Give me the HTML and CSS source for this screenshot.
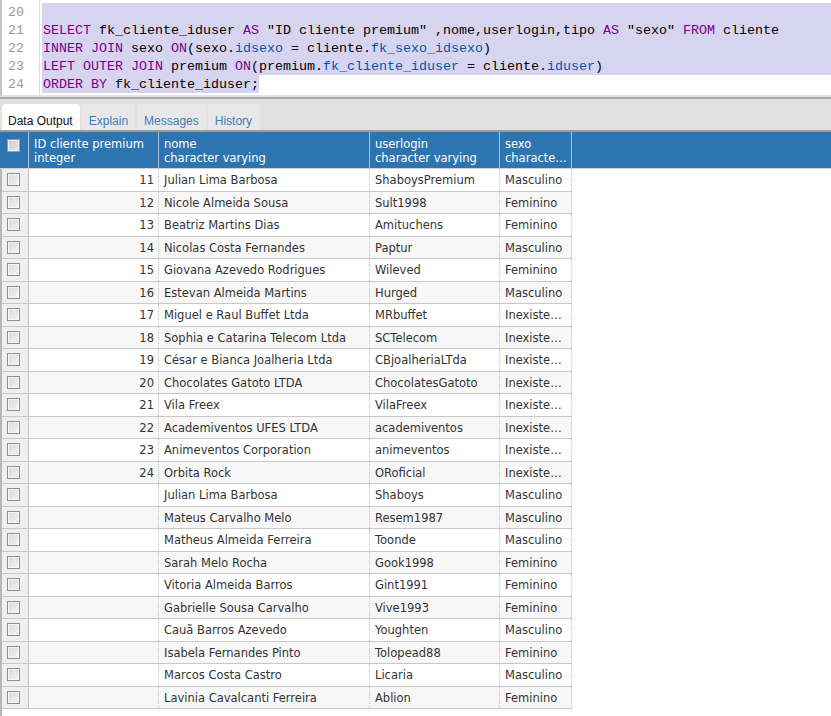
FILE: index.html
```html
<!DOCTYPE html>
<html lang="pt">
<head>
<meta charset="utf-8">
<title>Query</title>
<link rel="stylesheet" href="styles.css">
</head>
<body>
<div class="editor">
  <div class="gutter">
    <div class="ln">20</div>
    <div class="ln">21</div>
    <div class="ln">22</div>
    <div class="ln">23</div>
    <div class="ln">24</div>
  </div>
  <div class="code">
    <div class="line sel"> </div>
    <div class="line sel"><span class="kw">SELECT</span> fk_cliente_iduser <span class="kw">AS</span> "ID cliente premium" ,nome,userlogin,tipo <span class="kw">AS</span> "sexo" <span class="kw">FROM</span> cliente</div>
    <div class="line sel"><span class="kw">INNER JOIN</span> sexo <span class="kw">ON</span>(sexo.<span class="var">idsexo</span> = cliente.<span class="var">fk_sexo_idsexo</span>)</div>
    <div class="line sel"><span class="kw">LEFT OUTER JOIN</span> premium <span class="kw">ON</span>(premium.<span class="var">fk_cliente_iduser</span> = cliente.<span class="var">iduser</span>)</div>
    <div class="line"><span class="sel-part"><span class="kw">ORDER BY</span> fk_cliente_iduser;</span></div>
  </div>
</div>
<div class="results">
  <div class="tabs">
    <div class="tab active">Data Output</div>
    <div class="tab">Explain</div>
    <div class="tab">Messages</div>
    <div class="tab">History</div>
  </div>
  <div class="grid">
    <div class="head">
      <div class="hc h-cb"><span class="chk"></span></div>
      <div class="hc h-id"><div>ID cliente premium</div><div>integer</div></div>
      <div class="hc h-nome"><div>nome</div><div>character varying</div></div>
      <div class="hc h-login"><div>userlogin</div><div>character varying</div></div>
      <div class="hc h-sexo"><div>sexo</div><div>character varying</div></div>
    </div>
    <div class="body">
      <div class="row"><div class="cell c-cb"><span class="chk"></span></div><div class="cell c-id">11</div><div class="cell c-nome">Julian Lima Barbosa</div><div class="cell c-login">ShaboysPremium</div><div class="cell c-sexo">Masculino</div></div>
      <div class="row"><div class="cell c-cb"><span class="chk"></span></div><div class="cell c-id">12</div><div class="cell c-nome">Nicole Almeida Sousa</div><div class="cell c-login">Sult1998</div><div class="cell c-sexo">Feminino</div></div>
      <div class="row"><div class="cell c-cb"><span class="chk"></span></div><div class="cell c-id">13</div><div class="cell c-nome">Beatriz Martins Dias</div><div class="cell c-login">Amituchens</div><div class="cell c-sexo">Feminino</div></div>
      <div class="row"><div class="cell c-cb"><span class="chk"></span></div><div class="cell c-id">14</div><div class="cell c-nome">Nicolas Costa Fernandes</div><div class="cell c-login">Paptur</div><div class="cell c-sexo">Masculino</div></div>
      <div class="row"><div class="cell c-cb"><span class="chk"></span></div><div class="cell c-id">15</div><div class="cell c-nome">Giovana Azevedo Rodrigues</div><div class="cell c-login">Wileved</div><div class="cell c-sexo">Feminino</div></div>
      <div class="row"><div class="cell c-cb"><span class="chk"></span></div><div class="cell c-id">16</div><div class="cell c-nome">Estevan Almeida Martins</div><div class="cell c-login">Hurged</div><div class="cell c-sexo">Masculino</div></div>
      <div class="row"><div class="cell c-cb"><span class="chk"></span></div><div class="cell c-id">17</div><div class="cell c-nome">Miguel e Raul Buffet Ltda</div><div class="cell c-login">MRbuffet</div><div class="cell c-sexo">Inexistente</div></div>
      <div class="row"><div class="cell c-cb"><span class="chk"></span></div><div class="cell c-id">18</div><div class="cell c-nome">Sophia e Catarina Telecom Ltda</div><div class="cell c-login">SCTelecom</div><div class="cell c-sexo">Inexistente</div></div>
      <div class="row"><div class="cell c-cb"><span class="chk"></span></div><div class="cell c-id">19</div><div class="cell c-nome">César e Bianca Joalheria Ltda</div><div class="cell c-login">CBjoalheriaLTda</div><div class="cell c-sexo">Inexistente</div></div>
      <div class="row"><div class="cell c-cb"><span class="chk"></span></div><div class="cell c-id">20</div><div class="cell c-nome">Chocolates Gatoto LTDA</div><div class="cell c-login">ChocolatesGatoto</div><div class="cell c-sexo">Inexistente</div></div>
      <div class="row"><div class="cell c-cb"><span class="chk"></span></div><div class="cell c-id">21</div><div class="cell c-nome">Vila Freex</div><div class="cell c-login">VilaFreex</div><div class="cell c-sexo">Inexistente</div></div>
      <div class="row"><div class="cell c-cb"><span class="chk"></span></div><div class="cell c-id">22</div><div class="cell c-nome">Academiventos UFES LTDA</div><div class="cell c-login">academiventos</div><div class="cell c-sexo">Inexistente</div></div>
      <div class="row"><div class="cell c-cb"><span class="chk"></span></div><div class="cell c-id">23</div><div class="cell c-nome">Animeventos Corporation</div><div class="cell c-login">animeventos</div><div class="cell c-sexo">Inexistente</div></div>
      <div class="row"><div class="cell c-cb"><span class="chk"></span></div><div class="cell c-id">24</div><div class="cell c-nome">Orbita Rock</div><div class="cell c-login">ORoficial</div><div class="cell c-sexo">Inexistente</div></div>
      <div class="row"><div class="cell c-cb"><span class="chk"></span></div><div class="cell c-id"></div><div class="cell c-nome">Julian Lima Barbosa</div><div class="cell c-login">Shaboys</div><div class="cell c-sexo">Masculino</div></div>
      <div class="row"><div class="cell c-cb"><span class="chk"></span></div><div class="cell c-id"></div><div class="cell c-nome">Mateus Carvalho Melo</div><div class="cell c-login">Resem1987</div><div class="cell c-sexo">Masculino</div></div>
      <div class="row"><div class="cell c-cb"><span class="chk"></span></div><div class="cell c-id"></div><div class="cell c-nome">Matheus Almeida Ferreira</div><div class="cell c-login">Toonde</div><div class="cell c-sexo">Masculino</div></div>
      <div class="row"><div class="cell c-cb"><span class="chk"></span></div><div class="cell c-id"></div><div class="cell c-nome">Sarah Melo Rocha</div><div class="cell c-login">Gook1998</div><div class="cell c-sexo">Feminino</div></div>
      <div class="row"><div class="cell c-cb"><span class="chk"></span></div><div class="cell c-id"></div><div class="cell c-nome">Vitoria Almeida Barros</div><div class="cell c-login">Gint1991</div><div class="cell c-sexo">Feminino</div></div>
      <div class="row"><div class="cell c-cb"><span class="chk"></span></div><div class="cell c-id"></div><div class="cell c-nome">Gabrielle Sousa Carvalho</div><div class="cell c-login">Vive1993</div><div class="cell c-sexo">Feminino</div></div>
      <div class="row"><div class="cell c-cb"><span class="chk"></span></div><div class="cell c-id"></div><div class="cell c-nome">Cauã Barros Azevedo</div><div class="cell c-login">Youghten</div><div class="cell c-sexo">Masculino</div></div>
      <div class="row"><div class="cell c-cb"><span class="chk"></span></div><div class="cell c-id"></div><div class="cell c-nome">Isabela Fernandes Pinto</div><div class="cell c-login">Tolopead88</div><div class="cell c-sexo">Feminino</div></div>
      <div class="row"><div class="cell c-cb"><span class="chk"></span></div><div class="cell c-id"></div><div class="cell c-nome">Marcos Costa Castro</div><div class="cell c-login">Licaria</div><div class="cell c-sexo">Masculino</div></div>
      <div class="row"><div class="cell c-cb"><span class="chk"></span></div><div class="cell c-id"></div><div class="cell c-nome">Lavinia Cavalcanti Ferreira</div><div class="cell c-login">Ablion</div><div class="cell c-sexo">Feminino</div></div>
    </div>
  </div>
</div>
</body>
</html>
```
FILE: styles.css
```css
* { box-sizing: border-box; }
html, body { margin: 0; padding: 0; background: #fff; }
body {
  width: 831px;
  height: 716px;
  overflow: hidden;
  display: flex;
  flex-direction: column;
  font-family: "DejaVu Sans", Verdana, sans-serif;
  font-size: 11.5px;
  color: #333;
}

/* ---------- editor ---------- */
.editor {
  height: 97px;
  flex: none;
  display: flex;
  overflow: hidden;
  border-left: 2px solid #c4c4c4;
  border-bottom: 2px solid #e2e2e2;
  font-family: "Liberation Mono", "Courier New", monospace;
  font-size: 13.333px;
}
.gutter {
  width: 38px;
  flex: none;
  border-right: 1px solid #dcdcdc;
  padding-top: 3px;
  padding-right: 15px;
  text-align: right;
  color: #999;
}
.ln { height: 18px; padding-top: 2px; line-height: 16px; }
.code {
  flex: 1;
  min-width: 0;
  padding-top: 3px;
  padding-left: 2px;
  color: #000;
}
.line { padding: 2px 0 0 1px; height: 18px; line-height: 16px; white-space: pre; }
.sel { background: #d7d4f0; }
.sel-part { background: #d7d4f0; display: inline-block; height: 18px; margin: -2px 0 0 -1px; padding: 2px 0 0 1px; }
.kw { color: #770088; }
.var { color: #0055aa; }

/* ---------- results ---------- */
.results {
  flex: 1;
  display: flex;
  flex-direction: column;
  border-top: 2px solid #a9a9a9;
  min-height: 0;
}
.tabs {
  height: 33px;
  flex: none;
  display: flex;
  gap: 2px;
  padding: 5px 0 0 2px;
  background: #e1e1e1;
  border-bottom: 2px solid #9c9c9c;
  font-family: "Liberation Sans", Arial, sans-serif;
  font-size: 12px;
}
.tab {
  height: 26px;
  padding: 10px 7px 0;
  line-height: 14px;
  border-radius: 4px 4px 0 0;
  background: #e8e8e8;
  color: #3b7cc4;
}
.tab.active {
  background: #fff;
  color: #111;
  padding: 10px 7px 0 6px;
}

.grid {
  flex: 1;
  display: flex;
  flex-direction: column;
}
.head {
  height: 37px;
  flex: none;
  display: flex;
  background: #2c75b0;
  color: #fff;
  border-bottom: 1px solid #cfcfcf;
}
.hc {
  height: 36px;
  padding: 6px 4px 0 5px;
  line-height: 13.5px;
  text-align: left;
  border-right: 1px solid #a9c3da;
  white-space: nowrap;
  overflow: hidden;
}
.hc div { overflow: hidden; text-overflow: ellipsis; }
.h-cb { width: 29px; padding: 7px 0 0 7px; }
.h-id { width: 130px; }
.h-nome { width: 211px; }
.h-login { width: 130px; }
.h-sexo { width: 72px; }

.body {
  flex: 1;
  border-left: 2px solid #b8b8b8;
}
.row {
  display: flex;
  height: 22.5px;
  width: 570px;
  border-bottom: 1px solid #c8c8c8;
  background: #fff;
}
.row:nth-child(even) { background: #f7f7f7; }
.cell {
  padding: 1px 4px 0 5px;
  line-height: 21px;
  white-space: nowrap;
  overflow: hidden;
  text-overflow: ellipsis;
  border-right: 1px dotted #c4c4c4;
}
.c-cb {
  width: 27px;
  padding: 4px 0 0 5px;
  background: #efefef;
  border-right: 1px solid #c4c4c4;
}
.c-id { width: 130px; text-align: right; }
.c-nome { width: 211px; }
.c-login { width: 130px; }
.c-sexo { width: 72px; }

.chk {
  display: block;
  width: 13px;
  height: 13px;
  border: 1px solid #8e8e8e;
  box-shadow: inset 0 0 0 1px #f6f6f6;
  background: linear-gradient(135deg, #d9d9d9, #f5f5f5);
}
.h-cb .chk {
  border-color: #9c9c9c;
  box-shadow: inset 0 0 0 1px #eeeeee;
  background: linear-gradient(135deg, #cfcfcf, #e4e4e4);
}
```
